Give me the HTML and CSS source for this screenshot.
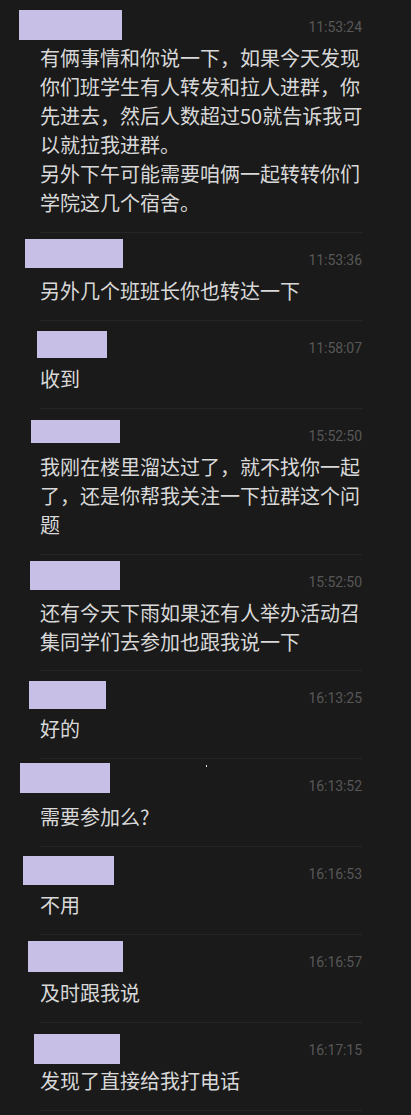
FILE: index.html
```html
<!DOCTYPE html>
<html lang="zh-CN">
<head>
<meta charset="utf-8">
<title>聊天记录</title>
<link rel="stylesheet" href="styles.css">
</head>
<body>
<main class="chat">
  <div class="msg">
    <span class="redact" style="left:-21px;top:10px;width:103px;height:30px"></span>
    <div class="msg-head"><span class="time">11:53:24</span></div>
    <div class="msg-text">有俩事情和你说一下，如果今天发现你们班学生有人转发和拉人进群，你先进去，然后人数超过50就告诉我可以就拉我进群。<br>另外下午可能需要咱俩一起转转你们学院这几个宿舍。</div>
  </div>
  <div class="msg">
    <span class="redact" style="left:-15px;top:6px;width:98px;height:29px"></span>
    <div class="msg-head"><span class="time">11:53:36</span></div>
    <div class="msg-text">另外几个班班长你也转达一下</div>
  </div>
  <div class="msg">
    <span class="redact" style="left:-3px;top:10px;width:70px;height:27px"></span>
    <div class="msg-head"><span class="time">11:58:07</span></div>
    <div class="msg-text">收到</div>
  </div>
  <div class="msg">
    <span class="redact" style="left:-9px;top:11px;width:89px;height:23px"></span>
    <div class="msg-head"><span class="time">15:52:50</span></div>
    <div class="msg-text">我刚在楼里溜达过了，就不找你一起了，还是你帮我关注一下拉群这个问题</div>
  </div>
  <div class="msg">
    <span class="redact" style="left:-10px;top:6px;width:90px;height:29px"></span>
    <div class="msg-head"><span class="time">15:52:50</span></div>
    <div class="msg-text">还有今天下雨如果还有人举办活动召集同学们去参加也跟我说一下</div>
  </div>
  <div class="msg">
    <span class="redact" style="left:-11px;top:10px;width:77px;height:28px"></span>
    <div class="msg-head"><span class="time">16:13:25</span></div>
    <div class="msg-text">好的</div>
  </div>
  <div class="msg">
    <span class="redact" style="left:-20px;top:4px;width:90px;height:30px"></span>
    <span class="speck"></span>
    <div class="msg-head"><span class="time">16:13:52</span></div>
    <div class="msg-text">需要参加么?</div>
  </div>
  <div class="msg">
    <span class="redact" style="left:-17px;top:9px;width:91px;height:29px"></span>
    <div class="msg-head"><span class="time">16:16:53</span></div>
    <div class="msg-text">不用</div>
  </div>
  <div class="msg">
    <span class="redact" style="left:-12px;top:6px;width:95px;height:31px"></span>
    <div class="msg-head"><span class="time">16:16:57</span></div>
    <div class="msg-text">及时跟我说</div>
  </div>
  <div class="msg">
    <span class="redact" style="left:-6px;top:11px;width:86px;height:30px"></span>
    <div class="msg-head"><span class="time">16:17:15</span></div>
    <div class="msg-text">发现了直接给我打电话</div>
  </div>
</main>
</body>
</html>
```

FILE: styles.css
```css
html, body {
  margin: 0;
  padding: 0;
  background: #1a1a1a;
}

body {
  font-family: "Noto Sans CJK SC", "Noto Sans", sans-serif;
  color: #dadada;
  overflow: hidden;
}

.chat {
  display: flex;
  flex-direction: column;
}

.msg {
  position: relative;
  margin: 0 49px 0 40px;
  padding: 13px 0 14.9px;
  border-bottom: 1px solid #252525;
}

.msg-head {
  height: 30px;
  display: flex;
  justify-content: flex-end;
  align-items: center;
}

.time {
  font-family: Roboto, "Noto Sans", sans-serif;
  font-size: 14px;
  line-height: 16px;
  letter-spacing: -0.05px;
  color: #575757;
  margin-top: -2px;
}

.msg-text {
  margin-right: -8px;
  font-size: 20px;
  line-height: 29px;
  color: #d8d8d8;
}

.redact {
  position: absolute;
  background: #c8bfe7;
}

.speck {
  position: absolute;
  left: 166px;
  top: 6px;
  width: 1px;
  height: 2px;
  background: #e6e4f5;
}
```
